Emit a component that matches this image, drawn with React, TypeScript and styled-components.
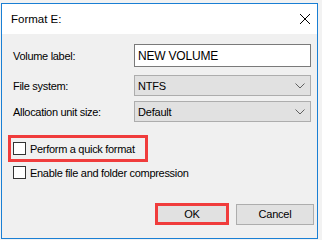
import React from "react";
import styled, { createGlobalStyle } from "styled-components";

const Global = createGlobalStyle`
  html, body { margin: 0; padding: 0; background: #e8e8e8; }
  body { width: 322px; height: 240px; overflow: hidden; font-family: "Liberation Sans", Arial, sans-serif; }
`;

const Desktop = styled.div`
  width: 322px;
  height: 240px;
  padding: 3px 0 0 1px;
  box-sizing: border-box;
  background: #f2f2f2;
`;

const Window = styled.div`
  width: 317px;
  height: 236px;
  box-sizing: border-box;
  border: 1px solid #1a7fd4;
  background: #f0f0f0;
  display: flex;
  flex-direction: column;
`;

const TitleBar = styled.div`
  height: 30px;
  background: #ffffff;
  display: flex;
  align-items: center;
  justify-content: space-between;
  padding: 0 6px 0 9px;
`;

const Title = styled.span`
  font-size: 11.5px;
  color: #000;
`;

const Close = styled.svg`
  width: 12px;
  height: 12px;
`;

const Body = styled.div`
  display: flex;
  flex-direction: column;
  padding: 10px 6px 0 0;
`;

const FieldRow = styled.div<{ $mt: number }>`
  display: flex;
  align-items: center;
  margin-top: ${(p) => p.$mt}px;
`;

const Label = styled.span`
  width: 121px;
  padding-left: 11px;
  font-size: 11px;
  letter-spacing: -0.3px;
  color: #000;
`;

const TextBox = styled.div`
  flex: 1;
  height: 23px;
  box-sizing: border-box;
  border: 1px solid #7a7a7a;
  background: #fff;
  display: flex;
  align-items: center;
  padding-left: 3px;
  font-size: 12px;
  letter-spacing: -0.2px;
  color: #000;
`;

const Select = styled.div`
  flex: 1;
  height: 21px;
  box-sizing: border-box;
  border: 1px solid #adadad;
  background: #e1e1e1;
  display: flex;
  align-items: center;
  justify-content: space-between;
  padding: 0 5px 0 3px;
  font-size: 11px;
  letter-spacing: -0.2px;
  color: #000;
`;

const Chevron = styled.svg`
  width: 10px;
  height: 6px;
`;

const Highlight = styled.div`
  margin: 13px 0 0 6px;
  width: 140px;
  height: 27px;
  box-sizing: border-box;
  border: 3px solid #f03c3c;
  display: flex;
  align-items: center;
  padding-left: 2px;
`;

const CheckRow = styled.label<{ $indent?: number; $mt?: number }>`
  display: flex;
  align-items: center;
  gap: 4px;
  margin-left: ${(p) => p.$indent ?? 0}px;
  margin-top: ${(p) => p.$mt ?? 0}px;
  font-size: 11px;
  letter-spacing: -0.3px;
  color: #000;
`;

const Box = styled.span`
  width: 13px;
  height: 13px;
  box-sizing: border-box;
  border: 1px solid #333;
  background: #fff;
  display: inline-block;
`;

const ButtonRow = styled.div`
  display: flex;
  justify-content: flex-end;
  align-items: center;
  gap: 7px;
  margin: 24px -3px 0 0;
`;

const Button = styled.div<{ $hl?: boolean }>`
  width: ${(p) => (p.$hl ? 74 : 78)}px;
  height: ${(p) => (p.$hl ? 22 : 21)}px;
  box-sizing: border-box;
  border: ${(p) => (p.$hl ? "3px solid #f03c3c" : "1px solid #adadad")};
  background: #e1e1e1;
  display: flex;
  align-items: center;
  justify-content: center;
  font-size: 11px;
  letter-spacing: -0.2px;
  color: #000;
`;

const ChevronIcon = () => (
  <Chevron viewBox="0 0 10 6">
    <path d="M0.5 0.5 L5 5 L9.5 0.5" fill="none" stroke="#606060" strokeWidth="1" />
  </Chevron>
);

export default function App() {
  return (
    <>
      <Global />
      <Desktop>
        <Window>
          <TitleBar>
            <Title>Format E:</Title>
            <Close viewBox="0 0 12 12">
              <path d="M1 1 L11 11 M11 1 L1 11" stroke="#000" strokeWidth="1" fill="none" />
            </Close>
          </TitleBar>
          <Body>
            <FieldRow $mt={0}>
              <Label>Volume label:</Label>
              <TextBox>NEW VOLUME</TextBox>
            </FieldRow>
            <FieldRow $mt={8}>
              <Label>File system:</Label>
              <Select>
                NTFS
                <ChevronIcon />
              </Select>
            </FieldRow>
            <FieldRow $mt={5}>
              <Label>Allocation unit size:</Label>
              <Select>
                Default
                <ChevronIcon />
              </Select>
            </FieldRow>
            <Highlight>
              <CheckRow>
                <Box />
                Perform a quick format
              </CheckRow>
            </Highlight>
            <CheckRow $indent={11} $mt={4}>
              <Box />
              Enable file and folder compression
            </CheckRow>
            <ButtonRow>
              <Button $hl>OK</Button>
              <Button>Cancel</Button>
            </ButtonRow>
          </Body>
        </Window>
      </Desktop>
    </>
  );
}
